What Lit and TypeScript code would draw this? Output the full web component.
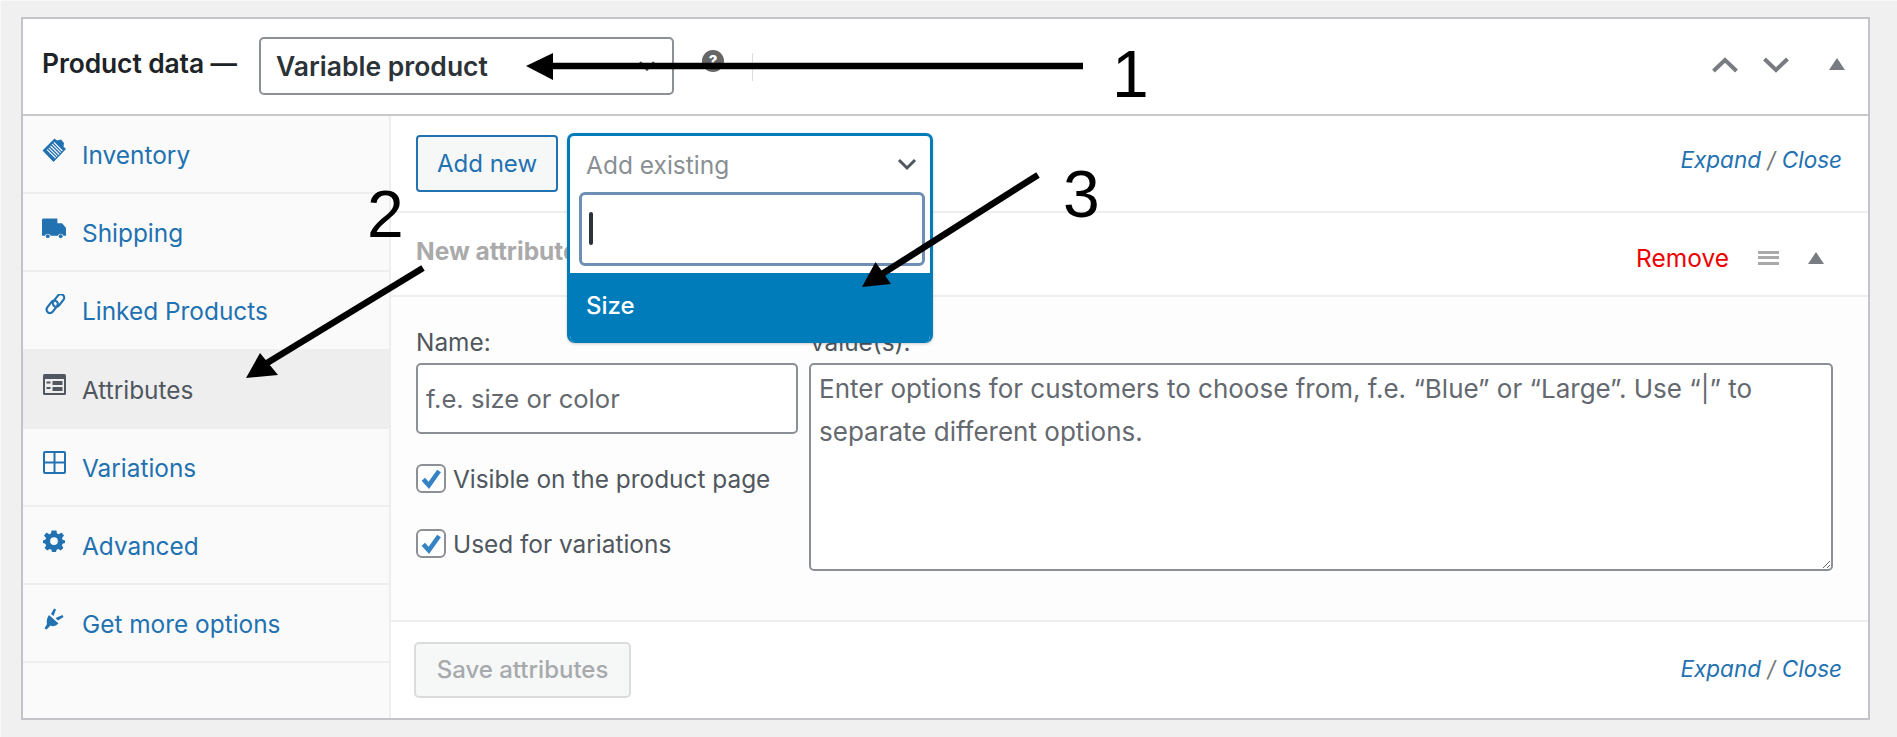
import { LitElement, html, css, svg } from "lit";
import { customElement } from "lit/decorators.js";

const icons: Record<string, unknown> = {
  inventory: svg`<svg viewBox="0 0 24 24" width="24" height="24"><path fill="currentColor" d="M12.5 0.5 L15 2.5 L19 1.5 L22 5 L21.5 8.5 L24 11 L11.5 24 L0.5 12.5 Z"/><path stroke="#fafafa" stroke-width="1.1" fill="none" d="M8.5 8 L17 16.5 M6.8 9.8 L15.3 18.3 M5.1 11.6 L13.6 20 M10.2 6.2 L18.7 14.7 M12 4.5 L20.4 13"/></svg>`,
  shipping: svg`<svg viewBox="0 0 25 21" width="25" height="21"><path fill="currentColor" d="M1 0 H16 V5 H21 L25 10 V18 H22.5 A3.2 3.2 0 0 0 16.5 18 H9 A3.2 3.2 0 0 0 3 18 H0 V1 Z"/><circle cx="6" cy="18.5" r="2" fill="currentColor"/><circle cx="19.5" cy="18.5" r="2" fill="currentColor"/></svg>`,
  link: svg`<svg viewBox="0 0 24 24" width="24" height="24" fill="none" stroke="currentColor" stroke-width="2.2"><rect x="-1" y="-3.5" width="14" height="7" rx="3.5" transform="translate(6.5 17.5) rotate(-52)"/><rect x="-7" y="-3.5" width="14" height="7" rx="3.5" transform="translate(16.5 6.5) rotate(-52)"/></svg>`,
  attributes: svg`<svg viewBox="0 0 23 21" width="23" height="21"><rect width="23" height="21" rx="1.5" fill="currentColor"/><rect x="2" y="5" width="19" height="14" fill="#eee"/><path fill="currentColor" d="M3.5 7.5 H7.5 V9.5 H3.5 Z M3.5 13 H7.5 V15 H3.5 Z M9.5 7 H19.5 V11 H9.5 Z M9.5 13 H19.5 V17 H9.5 Z"/></svg>`,
  variations: svg`<svg viewBox="0 0 23 23" width="23" height="23" fill="none" stroke="currentColor" stroke-width="2"><rect x="1" y="1" width="21" height="21" rx="1"/><path d="M11.5 1 V22 M1 11.5 H22"/></svg>`,
  advanced: svg`<svg viewBox="0 0 22 22" width="22" height="22"><path fill="currentColor" fill-rule="evenodd" d="M8.6 0.5 H13.4 L14 3.4 L15.9 4.2 L18.4 2.6 L21 5.6 L19 8 L19.7 9.8 L22 10.4 V13 L19.6 13.8 L18.9 15.6 L20.4 18 L17.7 20.6 L15.4 19 L13.6 19.8 L13 22 H9 L8.4 19.8 L6.6 19 L4.3 20.6 L1.6 18 L3.1 15.6 L2.4 13.8 L0 13 V10.4 L2.3 9.8 L3 8 L1 5.6 L3.6 2.6 L6.1 4.2 L8 3.4 Z M11 7.2 A3.9 3.9 0 1 0 11 15 A3.9 3.9 0 1 0 11 7.2 Z"/></svg>`,
  plug: svg`<svg viewBox="0 0 20 22" width="20" height="22"><path fill="currentColor" d="M5 7 L14.5 15.5 Q10.5 19.5 6.5 17.5 L2.6 21.5 L0.5 20.5 L3 16 Q2 11 5 7 Z M10 0.5 L12 1.5 L9.5 8 L7 6 Z M18.5 7 L19.5 9 L14 12.5 L11.5 10 Z"/></svg>`,
};

const nav = [
  ["Inventory", "inventory"],
  ["Shipping", "shipping"],
  ["Linked Products", "link"],
  ["Attributes", "attributes"],
  ["Variations", "variations"],
  ["Advanced", "advanced"],
  ["Get more options", "plug"],
];

const check = svg`<svg viewBox="0 0 20 20" width="22" height="22"><path fill="#3582c4" d="M8.2 19 L1.5 11.5 L4.6 8.8 L7.8 12.4 L15.6 1.5 L19 3.9 Z"/></svg>`;
const tri = svg`<svg viewBox="0 0 16 12" width="16" height="12"><path fill="currentColor" d="M8 0 L16 12 H0 Z"/></svg>`;

@customElement("app-root")
export class AppRoot extends LitElement {
  static styles = css`
    :host { display: block; position: relative; width: 1897px; height: 737px; box-sizing: border-box; padding: 17px 27px 17px 21px; background: #f0f0f1; box-shadow: inset 1px 1px 0 #f8f8f8; font-family: Inter, "Liberation Sans", sans-serif; color: #50575e; font-size: 24.4px; overflow: hidden; }
    * { box-sizing: border-box; }
    .box { height: 703px; border: 2px solid #c3c4c7; background: #fff; display: flex; flex-direction: column; }
    .head { height: 97px; flex: none; display: flex; align-items: center; border-bottom: 2px solid #c8c9cb; padding: 0 23px 0 19px; }
    .title { font-weight: 600; font-size: 26.4px; color: #1d2327; width: 217px; flex: none; margin-top: -7px; white-space: nowrap; letter-spacing: -0.1px; }
    .ptype { width: 415px; height: 58px; flex: none; border: 2px solid #8c8f94; border-radius: 5px; display: flex; align-items: center; justify-content: space-between; padding: 0 16px 0 15px; font-weight: 600; font-size: 26.5px; color: #2c3338; margin-top: -2px; }
    .help { width: 22px; height: 22px; border-radius: 50%; background: #666; color: #fff; font-size: 15px; font-weight: 800; display: flex; align-items: center; justify-content: center; margin: -12px 0 0 28px; flex: none; }
    .sep { width: 1px; height: 28px; background: #ddd; margin: 0 0 0 28px; flex: none; }
    .spacer { flex: 1; }
    .ha { display: flex; align-items: center; color: #787c82; margin-top: -3px; }
    .ha svg { display: block; }
    .ha .dn { margin-left: 25px; }
    .ha .up { margin-left: 40px; margin-top: -3px; }
    .cols { flex: 1; display: flex; min-height: 0; }
    .side { width: 368px; flex: none; background: #fafafa; border-right: 2px solid #eee; }
    .item { height: 78.2px; display: flex; align-items: center; padding-left: 19px; gap: 16px; color: #2271b1; border-bottom: 2px solid #eee; font-size: 24.4px; }
    .item span:last-child { margin-top: 2px; }
    .item.on { background: #eee; color: #50575e; border-bottom-color: #eee; }
    .ico { width: 24px; height: 24px; display: flex; align-items: center; justify-content: center; margin-bottom: 8px; flex: none; }
    .ico svg { display: block; }
    .main { flex: 1; display: flex; flex-direction: column; min-width: 0; }
    .bar { height: 97px; flex: none; display: flex; align-items: center; gap: 9px; padding: 0 26px 0 25px; border-bottom: 2px solid #eee; position: relative; }
    .btn { width: 142px; height: 57px; border: 2px solid #2271b1; border-radius: 4px; background: #f6f7f7; color: #2271b1; font-size: 24px; display: flex; align-items: center; justify-content: center; flex: none; }
    .combo { position: relative; width: 366px; height: 61px; flex: none; margin-top: -1px; }
    .menu { position: absolute; z-index: 2; top: 0; left: 0; right: 0; height: 210px; border: 3px solid #007cba; border-bottom: 0; border-radius: 7px 7px 8px 8px; background: #fff; display: flex; flex-direction: column; box-shadow: 0 1px 3px rgba(0,0,0,.2); overflow: hidden; }
    .mhead { height: 56px; flex: none; display: flex; align-items: center; justify-content: space-between; padding: 2px 13px 0 16px; color: #8a8f94; font-size: 24.5px; }
    .search { height: 74px; flex: none; margin: 0 5px 0 9px; border: 3px solid #6d8fb3; border-radius: 6px; display: flex; align-items: center; padding-left: 7px; }
    .caret { width: 4px; height: 33px; border-radius: 2px; background: #2c3338; }
    .opt { flex: 1; margin: 7px -3px 0; background: #007cba; color: #fff; font-size: 24px; font-weight: 500; padding: 0 0 4px 19px; display: flex; align-items: center; }
    .ec { margin-left: auto; font-style: italic; font-size: 22.5px; color: #2271b1; white-space: nowrap; }
    .bar .ec { margin-top: -9px; }
    .ec i { color: #777; }
    .row { height: 84px; flex: none; display: flex; align-items: center; padding: 0 44px 0 25px; border-bottom: 2px solid #eee; }
    .row b { color: #aaa; font-size: 24.5px; font-weight: 700; margin-top: -6px; white-space: nowrap; }
    .rem { margin-left: auto; color: #e00; font-size: 24.5px; margin-top: 7px; }
    .bars { width: 21px; height: 14px; margin: 7px 0 0 29px; flex: none; background: repeating-linear-gradient(#aaa 0 3px, transparent 3px 5.5px); }
    .rt { margin: 7px 0 0 29px; color: #787c82; display: flex; }
    .body { flex: 1; background: #fdfdfd; display: grid; grid-template-columns: 382px 1fr; column-gap: 11px; padding: 31px 35px 0 25px; border-bottom: 2px solid #eee; align-content: start; }
    label.l { display: block; height: 28px; line-height: 28px; margin-bottom: 7px; white-space: nowrap; font-size: 24.4px; }
    input.t, textarea { display: block; width: 100%; border: 2px solid #8c8f94; border-radius: 5px; background: #fff; font: inherit; padding: 0 8px; outline: 0; margin: 0; }
    input.t { height: 71px; font-size: 25.6px; }
    textarea { height: 208px; padding: 2px 8px; font-size: 26px; line-height: 43px; resize: both; }
    ::placeholder { color: #646970; opacity: 1; }
    .ck { display: flex; align-items: center; gap: 7px; height: 29px; margin-top: 36px; white-space: nowrap; }
    .ck:first-of-type { margin-top: 30px; }
    .ck .b { width: 30px; height: 29px; border: 2px solid #8c8f94; border-radius: 6px; background: #fff; display: flex; align-items: center; justify-content: center; flex: none; }
    .foot { height: 96px; flex: none; display: flex; align-items: center; padding: 0 26px 0 23px; background: #fff; }
    .save { width: 217px; height: 56px; border: 2px solid #dcdcde; border-radius: 5px; background: #f6f7f7; color: #a7aaad; display: flex; align-items: center; justify-content: center; font-size: 24px; font-weight: 500; margin-top: -1px; }
    .foot .ec { margin-top: -3px; }
    .over { position: absolute; left: 0; top: 0; pointer-events: none; z-index: 3; }
    .num { position: absolute; z-index: 4; font-family: "Liberation Sans", sans-serif; font-size: 66px; line-height: 66px; color: #000; }
    .n1 { left: 1112px; top: 41px; }
    .n2 { left: 367px; top: 181px; }
    .n3 { left: 1063px; top: 161px; }
  `;

  render() {
    return html`
      <div class="box">
        <div class="head">
          <div class="title">Product data —</div>
          <div class="ptype"><span>Variable product</span>
            <svg width="18" height="12" viewBox="0 0 18 12" fill="none" stroke="#50575e" stroke-width="2.5"><path d="M2 2 L9 9.5 L16 2"/></svg>
          </div>
          <div class="help">?</div>
          <div class="sep"></div>
          <div class="spacer"></div>
          <div class="ha">
            <svg width="26" height="16" viewBox="0 0 26 16" fill="none" stroke="currentColor" stroke-width="4"><path d="M1.5 14 L13 3 L24.5 14"/></svg>
            <svg class="dn" width="26" height="16" viewBox="0 0 26 16" fill="none" stroke="currentColor" stroke-width="4"><path d="M1.5 2 L13 13 L24.5 2"/></svg>
            <span class="up">${tri}</span>
          </div>
        </div>
        <div class="cols">
          <div class="side">
            ${nav.map(([t, i]) => html`<div class="item ${t === "Attributes" ? "on" : ""}"><span class="ico">${icons[i]}</span><span>${t}</span></div>`)}
          </div>
          <div class="main">
            <div class="bar">
              <div class="btn">Add new</div>
              <div class="combo">
                <div class="menu">
                  <div class="mhead"><span>Add existing</span>
                    <svg width="20" height="13" viewBox="0 0 20 13" fill="none" stroke="#50575e" stroke-width="3"><path d="M2 2 L10 10 L18 2"/></svg>
                  </div>
                  <div class="search"><div class="caret"></div></div>
                  <div class="opt">Size</div>
                </div>
              </div>
              <div class="ec"><span>Expand</span> <i>/</i> <span>Close</span></div>
            </div>
            <div class="row">
              <b>New attribute</b>
              <span class="rem">Remove</span>
              <span class="bars"></span>
              <span class="rt">${tri}</span>
            </div>
            <div class="body">
              <div>
                <label class="l">Name:</label>
                <input class="t" placeholder="f.e. size or color" />
                <div class="ck"><span class="b">${check}</span>Visible on the product page</div>
                <div class="ck"><span class="b">${check}</span>Used for variations</div>
              </div>
              <div>
                <label class="l">Value(s):</label>
                <textarea placeholder="Enter options for customers to choose from, f.e. “Blue” or “Large”. Use “|” to separate different options."></textarea>
              </div>
            </div>
            <div class="foot">
              <div class="save">Save attributes</div>
              <div class="ec"><span>Expand</span> <i>/</i> <span>Close</span></div>
            </div>
          </div>
        </div>
      </div>
      <svg class="over" width="1897" height="737" viewBox="0 0 1897 737">
        <path d="M1083 66 H548" stroke="#000" stroke-width="6.5" fill="none"/>
        <path d="M526 66 L553 53 V80 Z" fill="#000"/>
        <path d="M423 268 L267 363" stroke="#000" stroke-width="6.5" fill="none"/>
        <path d="M246 378 L260 353 L278 375 Z" fill="#000"/>
        <path d="M1038 175 L882 274" stroke="#000" stroke-width="6.5" fill="none"/>
        <path d="M862 287 L875.5 262 L891 284 Z" fill="#000"/>
      </svg>
      <div class="num n1">1</div>
      <div class="num n2">2</div>
      <div class="num n3">3</div>
    `;
  }
}
